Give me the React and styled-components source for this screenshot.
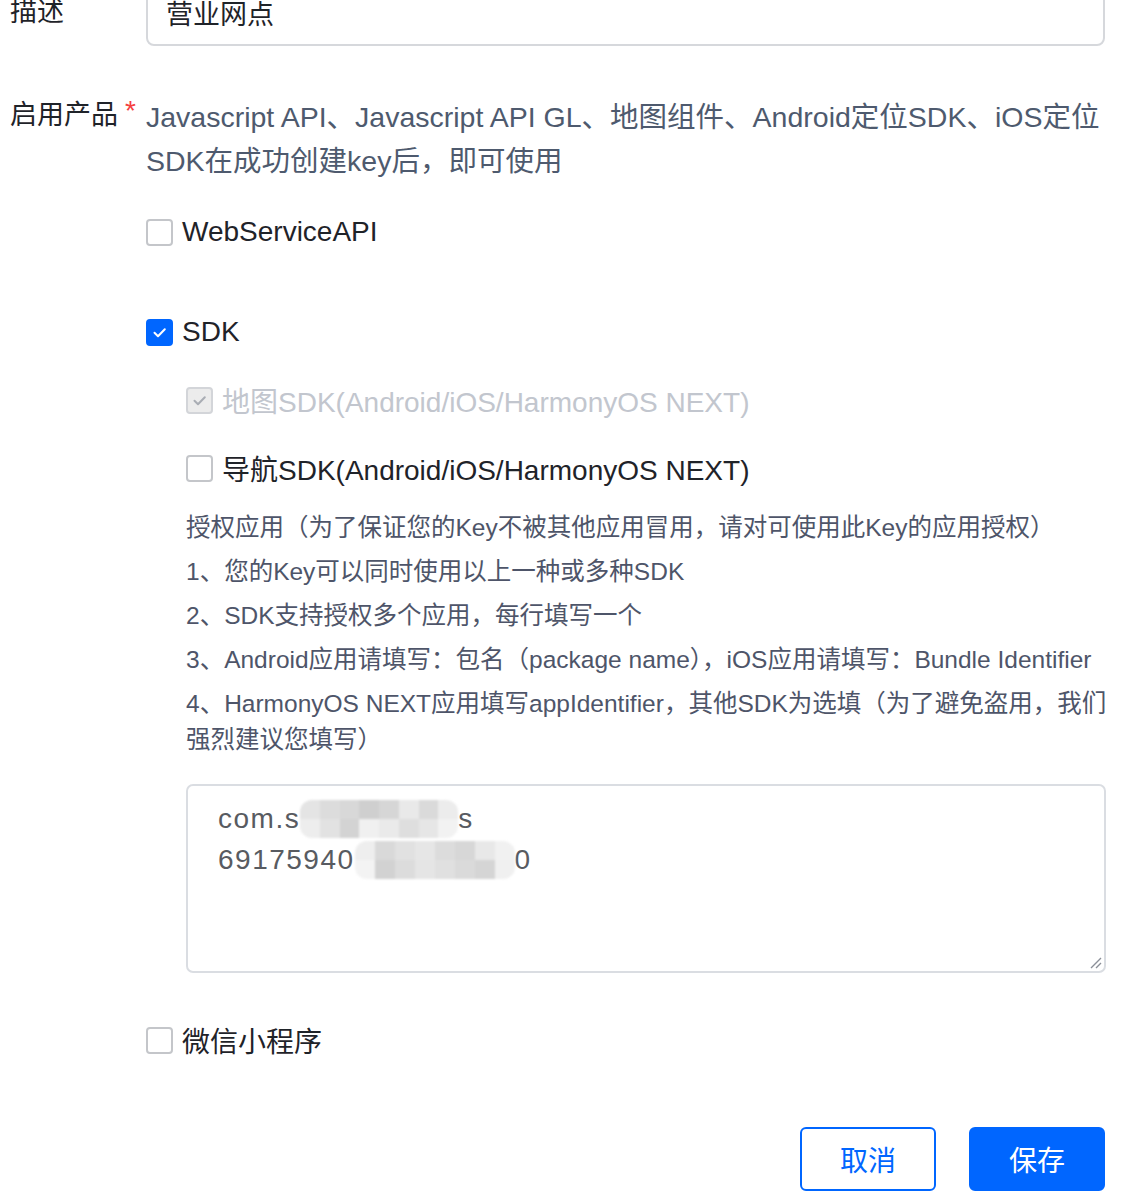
import React from 'react';
import styled, { createGlobalStyle } from 'styled-components';

const GlobalStyle = createGlobalStyle`
  html, body {
    margin: 0;
    padding: 0;
    background: #ffffff;
    overflow: hidden;
  }
  body {
    font-family: "Liberation Sans", "Noto Sans CJK SC", sans-serif;
    color: #1f2329;
  }
`;

const mosaicTop = [
  '#e4e4e4', '#dcdcdc', '#d8d8d8', '#cfcfcf', '#d6d6d6', '#e9e9e9', '#dadada', '#ececec',
  '#ededed', '#e2e2e2', '#d3d3d3', '#f0f0f0', '#eaeaea', '#dedede', '#e6e6e6', '#f2f2f2',
];
const mosaicBottom = [
  '#eeeeee', '#d9d9d9', '#e1e1e1', '#e6e6e6', '#dcdcdc', '#d7d7d7', '#e8e8e8', '#f1f1f1',
  '#f3f3f3', '#d2d2d2', '#dcdcdc', '#e5e5e5', '#e0e0e0', '#dadada', '#d5d5d5', '#f0f0f0',
];

const CheckMark = ({ color }) => (
  <svg width="17" height="17" viewBox="0 0 17 17">
    <path d="M3.5 8.8 L7 12.2 L13.8 5.2" fill="none" stroke={color} strokeWidth="2" strokeLinecap="round" strokeLinejoin="round" />
  </svg>
);

const Check = ({ checked, disabled, children }) => (
  <CheckItem disabled={disabled}>
    <Box $checked={checked} $disabled={disabled}>
      {checked && <CheckMark color={disabled ? '#a9adb4' : '#ffffff'} />}
    </Box>
    <span>{children}</span>
  </CheckItem>
);

const Mosaic = ({ width, cells }) => (
  <MosaicBlock $width={width}>
    {cells.map((c, i) => (
      <span key={i} style={{ background: c }} />
    ))}
  </MosaicBlock>
);

const App = () => {
  return (
    <>
      <GlobalStyle />
      <Page>
        <Row $center>
          <Label>描述</Label>
          <Input>营业网点</Input>
        </Row>

        <ProductRow>
          <Label>
            启用产品<Required>*</Required>
          </Label>
          <Content>
            <Description>
              Javascript API、Javascript API GL、地图组件、Android定位SDK、iOS定位
              SDK在成功创建key后，即可使用
            </Description>

            <CheckList>
              <Check>WebServiceAPI</Check>
              <SdkGroup>
                <Check checked>SDK</Check>
                <SubList>
                  <Check checked disabled>地图SDK(Android/iOS/HarmonyOS NEXT)</Check>
                  <Check>导航SDK(Android/iOS/HarmonyOS NEXT)</Check>
                </SubList>
                <Hint>
                  <p>授权应用（为了保证您的Key不被其他应用冒用，请对可使用此Key的应用授权）</p>
                  <p>1、您的Key可以同时使用以上一种或多种SDK</p>
                  <p>2、SDK支持授权多个应用，每行填写一个</p>
                  <p>3、Android应用请填写：包名（package name），iOS应用请填写：Bundle Identifier</p>
                  <p>
                    <span>4、HarmonyOS NEXT应用填写appIdentifier，其他SDK为选填（为了避免盗用，我们</span>
                    <br />
                    强烈建议您填写）
                  </p>
                </Hint>
                <TextArea>
                  <Line>
                    com.s<Mosaic width={158} cells={mosaicTop} />s
                  </Line>
                  <Line>
                    69175940<Mosaic width={160} cells={mosaicBottom} />0
                  </Line>
                  <Grip viewBox="0 0 14 14" width="14" height="14">
                    <path d="M13 3 L3 13 M13 8 L8 13" stroke="#8a8f98" strokeWidth="1.4" />
                  </Grip>
                </TextArea>
              </SdkGroup>
              <WechatItem>
                <Check>微信小程序</Check>
              </WechatItem>
            </CheckList>
          </Content>
        </ProductRow>

        <Footer>
          <Button>取消</Button>
          <Button $primary>保存</Button>
        </Footer>
      </Page>
    </>
  );
};

export default App;

// Styled Components
const Page = styled.div`
  margin-top: -22px;
  padding: 0 43px 0 10px;
  height: 1224px;
  box-sizing: border-box;
`;

const Row = styled.div`
  display: grid;
  grid-template-columns: 136px 1fr;
  align-items: ${(p) => (p.$center ? 'center' : 'start')};
`;

const ProductRow = styled(Row)`
  margin-top: 49px;
`;

const Label = styled.div`
  font-size: 27px;
  line-height: 32px;
  color: #1f2329;
  white-space: nowrap;
`;

const Required = styled.span`
  color: #f53f3f;
  font-size: 28px;
  margin-left: 7px;
  vertical-align: 4px;
`;

const Input = styled.div`
  height: 68px;
  box-sizing: border-box;
  border: 2px solid #d6d8dc;
  border-radius: 8px;
  padding: 0 18px;
  display: flex;
  align-items: center;
  font-size: 27px;
  color: #1f2329;
`;

const Content = styled.div`
  display: flex;
  flex-direction: column;
`;

const Description = styled.div`
  font-size: 28.5px;
  line-height: 44px;
  color: #4e5a6e;
`;

const CheckList = styled.div`
  margin-top: 27px;
  display: flex;
  flex-direction: column;
`;

const CheckItem = styled.label`
  display: flex;
  align-items: center;
  gap: 9px;
  height: 44px;
  font-size: 28px;
  color: ${(p) => (p.disabled ? '#c2c6ce' : '#1f2329')};
  white-space: nowrap;
`;

const Box = styled.span`
  width: 27px;
  height: 27px;
  box-sizing: border-box;
  border-radius: 4px;
  border: 2px solid
    ${(p) => (p.$disabled ? '#d3d5d9' : p.$checked ? '#0066ff' : '#c4c6ca')};
  background: ${(p) => (p.$disabled ? '#ececec' : p.$checked ? '#0066ff' : '#ffffff')};
  display: flex;
  align-items: center;
  justify-content: center;
  flex-shrink: 0;
`;

const SdkGroup = styled.div`
  margin-top: 56px;
  display: flex;
  flex-direction: column;
`;

const SubList = styled.div`
  margin: 24px 0 0 40px;
  display: flex;
  flex-direction: column;
  gap: 24px;
`;

const Hint = styled.div`
  margin: 20px 0 0 40px;
  font-size: 24.5px;
  line-height: 36px;
  color: #4e5569;

  p {
    margin: 0 0 8px;
  }
  p:last-child {
    margin-bottom: 0;
  }
  span {
    white-space: nowrap;
  }
`;

const TextArea = styled.div`
  position: relative;
  margin: 26px 0 0 40px;
  height: 189px;
  box-sizing: border-box;
  border: 2px solid #dadde2;
  border-radius: 7px;
  padding: 12px 30px;
  font-size: 28px;
  line-height: 41px;
  letter-spacing: 1.5px;
  color: #585b61;
`;

const Line = styled.div`
  display: flex;
  align-items: center;
  white-space: nowrap;
`;

const MosaicBlock = styled.span`
  display: inline-grid;
  grid-template-columns: repeat(8, 1fr);
  grid-template-rows: repeat(2, 1fr);
  width: ${(p) => p.$width}px;
  height: 38px;
  border-radius: 12px;
  overflow: hidden;
  filter: blur(1px);
`;

const Grip = styled.svg`
  position: absolute;
  right: 2px;
  bottom: 2px;
`;

const WechatItem = styled.div`
  margin-top: 45px;
`;

const Footer = styled.div`
  margin-top: 65px;
  display: flex;
  justify-content: flex-end;
  gap: 33px;
`;

const Button = styled.button`
  width: 136px;
  height: 64px;
  box-sizing: border-box;
  border-radius: 6px;
  border: 2px solid #0066ff;
  background: ${(p) => (p.$primary ? '#0066ff' : '#ffffff')};
  color: ${(p) => (p.$primary ? '#ffffff' : '#0066ff')};
  font-family: "Liberation Sans", "Noto Sans CJK SC", sans-serif;
  font-size: 28px;
  cursor: pointer;
`;
